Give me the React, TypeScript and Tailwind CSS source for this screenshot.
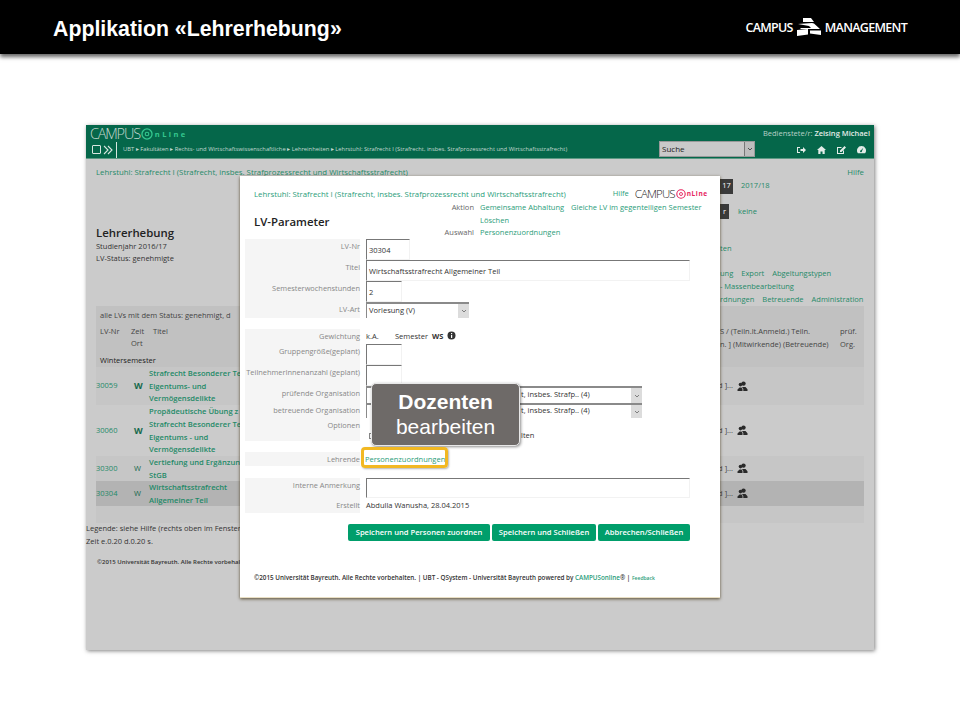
const G = "text-[#1f8a68]";

function Input({ w, text = "", h = "h-[21px]" }: { w: string; text?: string; h?: string }) {
  return (
    <div className={`${w} ${h} flex items-end pl-[2px] pb-[3px] border-t border-l border-t-[#777] border-l-[#777] border-r border-b border-r-[#f2f2f2] border-b-[#f2f2f2] text-[7.5px] text-[#333]`}>
      {text}
    </div>
  );
}

function Select({ w, text, h = "h-[16px]", pad = "pl-[2px]" }: { w: string; text: string; h?: string; pad?: string }) {
  return (
    <div className={`${w} ${h} flex items-center justify-between ${pad} border-t-2 border-l border-t-[#8a8a8a] border-l-[#8a8a8a] text-[7.5px] text-[#333]`}>
      <span className="-mt-[1px]">{text}</span>
      <span className="w-[11px] h-full bg-[#dcdcdc] flex items-center justify-center">
        <svg width="6" height="4" viewBox="0 0 6 4"><path d="M1 1l2 2 2-2" fill="none" stroke="#666" strokeWidth="0.8" /></svg>
      </span>
    </div>
  );
}

function Row({ label, h, children }: { label: string; h: string; children?: React.ReactNode }) {
  return (
    <div className={`flex ${h}`}>
      <div className="w-[115px] shrink-0 bg-[#f5f5f5] text-right text-[7.4px] text-[#888] leading-[14px] whitespace-nowrap flex justify-end">
        {label}
      </div>
      <div className="pl-[6px] flex-1 flex items-start">{children}</div>
    </div>
  );
}

function People() {
  return (
    <svg width="11" height="11" viewBox="0 0 11 11" fill="#2a2a2a">
      <circle cx="6.5" cy="2.6" r="2.2" />
      <circle cx="3.5" cy="3.6" r="1.8" />
      <path d="M0.5 10V8.6L2.5 6.5h2l1 1.5V10zM5 6h3.5l2 2.2V10H6.3V8z" />
    </svg>
  );
}

function OnlineLogo({ dark }: { dark?: boolean }) {
  const c = dark ? "#e6245e" : "#35c78f";
  return (
    <span className="flex items-center">
      <span className={`leading-none font-light ${dark ? "text-[11.5px] tracking-[-0.9px] text-[#222]" : "text-[14.5px] tracking-[-1.2px] text-[#c5d8d0]"}`}>CAMPUS</span>
      <svg width={dark ? 10 : 12} height={dark ? 10 : 12} viewBox="0 0 10 10" className="ml-[1px]">
        <circle cx="5" cy="5" r="4.2" fill="none" stroke={c} strokeWidth="1.1" />
        <circle cx="5" cy="5" r="1.5" fill="none" stroke={c} strokeWidth="0.9" />
      </svg>
      <span className={`font-bold ${dark ? "text-[6.5px] tracking-[0.6px] ml-[1px]" : "text-[7.5px] tracking-[2.4px] ml-[2px]"}`} style={{ color: c }}>nLine</span>
    </span>
  );
}

function TableRow({ nr, bold, title, bg, h }: { nr: string; bold?: boolean; title: string[]; bg: string; h: string }) {
  return (
    <div className={`flex ${bg} ${h} items-center justify-between`}>
      <div className="flex items-center">
        <span className={`w-[35px] ${G}`}>{nr}</span>
        <span className={`w-[18px] pl-[3px] text-[#17694d] ${bold ? "font-bold text-[9px]" : ""}`}>W</span>
        <div className={`font-semibold text-[7.6px] leading-[12.6px] ${G} whitespace-nowrap`}>
          {title.map((t) => <div key={t}>{t}</div>)}
        </div>
      </div>
      <div className="flex items-center gap-[4px] pr-[116px] text-[#444]">
        <span>d ]...</span>
        <People />
      </div>
    </div>
  );
}

export default function App() {
  return (
    <div className="relative w-[960px] h-[720px] bg-white overflow-hidden font-['Liberation_Sans',sans-serif]">
      <header className="h-[54px] bg-black flex items-center justify-between pl-[53px] pr-[53px] shadow-[0_3px_4px_rgba(0,0,0,0.6)]">
        <h1 className="text-white font-bold text-[21.3px] leading-none mt-[6px]">Applikation «Lehrerhebung»</h1>
        <div className="flex items-center text-white font-['Open_Sans',sans-serif] font-semibold text-[12.5px] tracking-[-0.7px] leading-none mt-[2px]">
          <span>CAMPUS</span>
          <svg width="24" height="18" viewBox="0 0 24 18" className="ml-[4px] mr-[4px] -mt-[3px]" fill="white">
            <path d="M6 0h8l3 4H6zM1 6l14-1 2 .5L23 11H4l-1-1h11l-2-2zM0 12l11-1v5.500L0 18zM13 12.500h11V17l-11-1.500z" />
          </svg>
          <span>MANAGEMENT</span>
        </div>
      </header>

      <main className="pt-[71px] pl-[86px]">
        <section className="relative w-[788px] h-[525px] bg-[#cbcbcb] shadow-[1px_1px_4px_rgba(0,0,0,0.5)] font-['Open_Sans',sans-serif] text-[7.5px] text-[#444]">
          {/* green bar */}
          <div className="h-[34px] bg-[#05674a] border-b border-[#5c9a84] flex justify-between">
            <div className="pl-[4px] pt-[2px]">
              <OnlineLogo />
              <div className="flex items-center pl-[2px] text-[#c4d9d1] text-[5.8px] whitespace-nowrap">
                <span className="w-[9px] h-[9px] border border-[#d8e6e0] rounded-[1px]" />
                <svg width="10" height="10" viewBox="0 0 10 10" className="ml-[2px]" fill="none" stroke="#d8e6e0" strokeWidth="1.1">
                  <path d="M1 1l4 4-4 4M5 1l4 4-4 4" />
                </svg>
                <span className="w-px h-[16px] bg-[#d8e6e0] ml-[3px] mr-[6px]" />
                <span>UBT ▸ Fakultäten ▸ Rechts- und Wirtschaftswissenschaftliche ▸ Lehreinheiten ▸ Lehrstuhl: Strafrecht I (Strafrecht, insbes. Strafprozessrecht und Wirtschaftsstrafrecht)</span>
              </div>
            </div>
            <div className="flex items-end">
              <div className="w-[96px] h-[16px] mb-[1px] mr-[39px] bg-[#c9c9c9] border border-[#999] flex items-center justify-between pl-[2px] text-[8px] text-[#222]">
                Suche
                <span className="w-[10px] h-full bg-[#bdbdbd] border-l border-[#777] flex items-center justify-center">
                  <svg width="6" height="4" viewBox="0 0 6 4"><path d="M1 1l2 2 2-2" fill="none" stroke="#333" strokeWidth="0.8" /></svg>
                </span>
              </div>
              <div className="w-[80px] pr-[4px] h-full flex flex-col items-end justify-between pt-[3px] pb-[4px]">
                <span className="text-[7.5px] text-[#b9d2c8] whitespace-nowrap">Bedienstete/r: <span className="font-semibold text-[#e3ece8]">Zeising Michael</span></span>
                <span className="flex gap-[11px] pr-[4px] text-[#e3ece8]">
                  <svg width="9" height="8" viewBox="0 0 9 8" fill="currentColor"><path d="M0 1h3v1H1v4h2v1H0zM3.500 3H6V1l3 3-3 3V5H3.500z" /></svg>
                  <svg width="9" height="8" viewBox="0 0 9 8" fill="currentColor"><path d="M4.500 0L9 4H7.700v4H5.500V5.500h-2V8H1.300V4H0z" /></svg>
                  <svg width="9" height="8" viewBox="0 0 9 8" fill="currentColor"><path d="M0 1h5L4 2H1v5h5V5l1-1v4H0zM7.500 0L9 1.500 4.500 6H3V4.500z" /></svg>
                  <svg width="9" height="8" viewBox="0 0 9 8" fill="currentColor"><path d="M4.500 0a4.500 4.500 0 0 1 3.600 7.200H.9A4.500 4.500 0 0 1 4.500 0zm1.800 1.800L4 4.200a1 1 0 1 0 1 .8z" /></svg>
                </span>
              </div>
            </div>
          </div>

          {/* page behind dialog */}
          <div className="px-[10px] pt-[8px]">
            <div className={`flex justify-between ${G} text-[7.8px] leading-[11px]`}>
              <span>Lehrstuhl: Strafrecht I (Strafrecht, insbes. Strafprozessrecht und Wirtschaftsstrafrecht)</span>
              <span>Hilfe</span>
            </div>
            <div className="flex justify-between h-[128px]">
              <div className="pt-[47px]">
                <h2 className="text-[11.4px] font-semibold leading-[15px] text-[#222]">Lehrerhebung</h2>
                <div className="leading-[12px] text-[#333]">Studienjahr 2016/17</div>
                <div className="leading-[12px] text-[#333]">LV-Status: genehmigte</div>
              </div>
              <div className={`w-[144px] ${G} whitespace-nowrap`}>
                <div className="flex items-center h-[16px]">
                  <span className="w-[13px] h-[15px] bg-[#3a3a3a] text-white flex items-center justify-center">17</span>
                  <span className="ml-[8px]">2017/18</span>
                </div>
                <div className="flex items-center h-[15px] mt-[10px]">
                  <span className="w-[9px] h-[15px] bg-[#3a3a3a] text-white flex items-center justify-center">r</span>
                  <span className="ml-[9px]">keine</span>
                </div>
                <div className="mt-[24px] leading-[11px]">ten</div>
                <div className="mt-[13px] leading-[13px] flex gap-[8px]"><span>ung</span><span>Export</span><span>Abgeltungstypen</span></div>
                <div className="leading-[13px]">- Massenbearbeitung</div>
                <div className="leading-[13px] flex gap-[8px]"><span>rdnungen</span><span>Betreuende</span><span>Administration</span></div>
              </div>
            </div>

            <div className="bg-[#c1c1c1] h-[61px] flex flex-col">
              <div className="flex justify-between">
                <div className="pl-[4px]">
                  <div className="leading-[14px] pt-[2px] text-[#444]">alle LVs mit dem Status: genehmigt, d</div>
                  <div className="flex leading-[12px] mt-[3px]">
                    <span className="w-[31px]">LV-Nr</span>
                    <span className="w-[22px]">Zeit<br />Ort</span>
                    <span>Titel</span>
                  </div>
                </div>
                <div className="flex pt-[19px] leading-[12.6px] pr-[7px]">
                  <span className="w-[120px] whitespace-nowrap">S / (Teiln.lt.Anmeld.) Teiln.<br />n. ] (Mitwirkende) (Betreuende)</span>
                  <span className="w-[17px]">prüf.<br />Org.</span>
                </div>
              </div>
              <div className="mt-auto leading-[14px] pl-[4px] text-[#222]">Wintersemester</div>
            </div>
            <TableRow nr="30059" bold bg="bg-[#c6c6c6]" h="h-[38px]" title={["Strafrecht Besonderer Te", "Eigentums- und", "Vermögensdelikte"]} />
            <TableRow nr="30060" bold bg="bg-[#cbcbcb]" h="h-[51px]" title={["Propädeutische Übung z", "Strafrecht Besonderer Te", "Eigentums - und", "Vermögensdelikte"]} />
            <TableRow nr="30300" bg="bg-[#c6c6c6]" h="h-[25px]" title={["Vertiefung und Ergänzun", "StGB"]} />
            <TableRow nr="30304" bg="bg-[#b3b3b3]" h="h-[25px]" title={["Wirtschaftsstrafrecht", "Allgemeiner Teil"]} />
            <div className="h-[17px] bg-[#c6c6c6]" />
          </div>
          <div className="leading-[13px] text-[#333] -mt-[1px] whitespace-nowrap">
            <div>Legende: siehe Hilfe (rechts oben im Fenster)</div>
            <div>Zeit e.0.20 d.0.20 s.</div>
          </div>
          <div className="pl-[11px] mt-[9px] text-[6px] font-semibold text-[#333] whitespace-nowrap leading-[10px]">©2015 Universität Bayreuth. Alle Rechte vorbehalten.</div>

          {/* dialog */}
          <div className="absolute left-[154px] top-[51px] w-[480px] h-[422px] bg-white shadow-[0_1px_3px_rgba(60,45,10,0.8)] border-b border-[#e9dfc4] pl-[5px] text-[7.5px] text-[#444]">
            <div className="flex pl-[9px] pt-[13px] h-[31px]">
              <span className="text-[#2a9d7a] text-[7.8px] whitespace-nowrap">Lehrstuhl: Strafrecht I (Strafrecht, insbes. Strafprozessrecht und Wirtschaftsstrafrecht)</span>
              <span className="text-[#2a9d7a] ml-[47px] -mt-[1px]">Hilfe</span>
              <span className="ml-[6px] -mt-[1px]"><OnlineLogo dark /></span>
            </div>
            <div className="flex h-[32px]">
              <div className="pl-[9px] pt-[6px] w-[229px] text-[11.4px] font-semibold text-[#222] leading-[18px]">LV-Parameter</div>
              <div className="flex text-[#2a9d7a] -mt-[6px] leading-[12.5px]">
                <div className="text-right text-[#666] w-[0px] flex flex-col items-end whitespace-nowrap">
                  <span>Aktion</span>
                  <span className="mt-[12.5px]">Auswahl</span>
                </div>
                <div className="pl-[6px] whitespace-nowrap">
                  <div className="flex gap-[7px]"><span>Gemeinsame Abhaltung</span><span>Gleiche LV im gegenteiligen Semester</span></div>
                  <div>Löschen</div>
                  <div>Personenzuordnungen</div>
                </div>
              </div>
            </div>

            <div>
              <Row label="LV-Nr" h="h-[21px]"><Input w="w-[44px]" text="30304" /></Row>
              <Row label="Titel" h="h-[21px]"><Input w="w-[324px]" text="Wirtschaftsstrafrecht Allgemeiner Teil" /></Row>
              <Row label="Semesterwochenstunden" h="h-[21px]"><Input w="w-[36px]" text="2" /></Row>
              <Row label="LV-Art" h="h-[16px]"><Select w="w-[103px]" text="Vorlesung (V)" /></Row>
            </div>

            <div className="mt-[11px]">
              <Row label="Gewichtung" h="h-[15px]">
                <div className="flex items-center h-[15px] pt-[1px] text-[#333]">
                  <span className="w-[29px]">k.A.</span>
                  <span className="w-[37px]">Semester</span>
                  <span className="font-bold w-[15px]">WS</span>
                  <svg width="9" height="9" viewBox="0 0 9 9" className="-mt-[3px]"><circle cx="4.5" cy="4.5" r="4" fill="#333" /><rect x="4" y="4" width="1.2" height="3" fill="#fff" /><rect x="4" y="2" width="1.2" height="1.2" fill="#fff" /></svg>
                </div>
              </Row>
              <Row label="Gruppengröße(geplant)" h="h-[21px]"><Input w="w-[36px]" /></Row>
              <Row label="TeilnehmerInnenanzahl (geplant)" h="h-[21px]"><Input w="w-[36px]" /></Row>
              <Row label="prüfende Organisation" h="h-[17px]">
                <Select w="w-[276px]" text="t, insbes. Strafp.. (4)" h="h-[17px]" pad="pl-[154px]" />
              </Row>
              <Row label="betreuende Organisation" h="h-[15px]">
                <Select w="w-[276px]" text="t, insbes. Strafp.. (4)" h="h-[15px]" pad="pl-[154px]" />
              </Row>
              <Row label="Optionen" h="h-[23px]">
                <div className="flex w-full pt-[12px] pl-[3px] items-center h-[23px] text-[#333]">
                  <span className="w-[6px] h-[6px] border border-[#888]" />
                  <span className="pl-[146px]">lten</span>
                </div>
              </Row>
            </div>

            <div className="mt-[11px]">
              <Row label="Lehrende" h="h-[14px]">
                <span className="-ml-[1px] text-[#2a9d7a] leading-[14px]">Personenzuordnungen</span>
              </Row>
            </div>

            <div className="mt-[12px]">
              <Row label="Interne Anmerkung" h="h-[20px]"><Input w="w-[324px]" h="h-[20px]" /></Row>
              <Row label="Erstellt" h="h-[15px]"><span className="leading-[15px] text-[#333]">Abdulla Wanusha, 28.04.2015</span></Row>
            </div>

            <div className="flex gap-[2px] pl-[103px] mt-[11px] text-[7.6px] font-semibold text-white">
              <span className="w-[142px] h-[17px] rounded-[2px] bg-[#009e6b] flex items-center justify-center">Speichern und Personen zuordnen</span>
              <span className="w-[104px] h-[17px] rounded-[2px] bg-[#009e6b] flex items-center justify-center">Speichern und Schließen</span>
              <span className="w-[92px] h-[17px] rounded-[2px] bg-[#009e6b] flex items-center justify-center">Abbrechen/Schließen</span>
            </div>

            <div className="pl-[9px] mt-[32px] text-[6.3px] font-semibold text-[#333] whitespace-nowrap">
              ©2015 Universität Bayreuth. Alle Rechte vorbehalten. | UBT - QSystem - Universität Bayreuth powered by <span className="text-[#2a9d7a]">CAMPUSonline</span>® | <span className="text-[5px] text-[#2a9d7a]">Feedback</span>
            </div>
          </div>

          {/* callout */}
          <div className="absolute left-[285px] top-[258px] w-[149px] h-[63px] rounded-[5px] bg-[#6e6a68] border border-[#e8e8e8] shadow-[1px_1px_3px_rgba(0,0,0,0.45)] flex flex-col items-center justify-center pb-[2px] text-white font-['Liberation_Sans',sans-serif] text-[21px] leading-[25px]">
            <span className="font-bold">Dozenten</span>
            <span>bearbeiten</span>
          </div>
          {/* highlight */}
          <div className="absolute left-[275px] top-[322px] w-[87px] h-[21px] rounded-[4px] border-[3px] border-[#f2b822] shadow-[1px_1px_2px_rgba(0,0,0,0.3)]" />
        </section>
      </main>
    </div>
  );
}
